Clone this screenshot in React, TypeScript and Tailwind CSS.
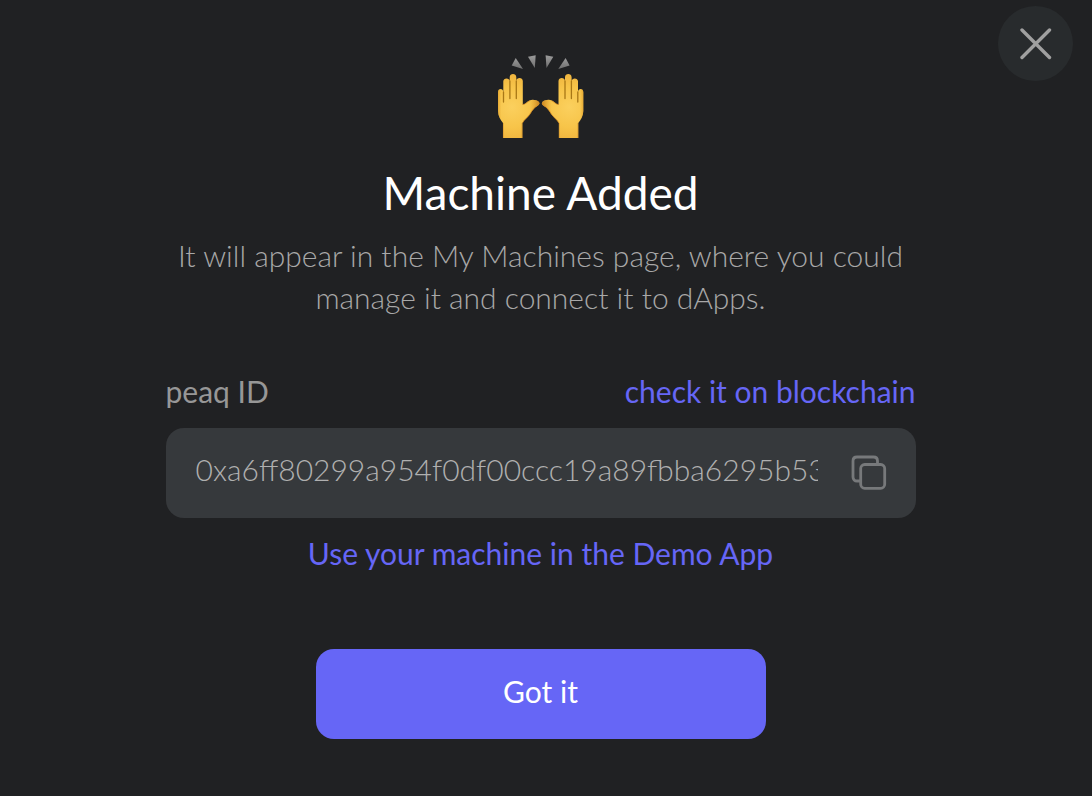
import React from "react";

const HAND =
  "M6 83V68C3.5 65 1 61 1 56V37.2C1 33 6.3 33 6.3 37.2V26.3C6.3 22.4 12.7 22.4 12.7 26.3V22.3C12.7 18 19.3 18 19.3 22.3V26C19.3 22 25.8 22 25.8 26V49.5C28.5 49 30 46.6 32.5 45.4C35.5 44 40 45 42 47C43 48.6 42.2 50 40 51.2C36 53.3 34.8 57 32.2 60.2C30 63 27 64.8 25.4 68V83Z";

function Hand() {
  return (
    <g>
      <path d={HAND} fill="url(#skin)" />
      <path d={HAND} fill="url(#edge)" />
      <path d="M6.5 37V47M12.9 26V43.5M19.3 26V43.5" fill="none" stroke="#a87716" strokeWidth="1.3" strokeLinecap="round" />
      <path d="M25.4 49.5C28 50 30.5 46.5 33 45.6M42 48.5C41 51 37 52 34.5 56.5C32.5 61 27.5 64 25.4 68" fill="none" stroke="#d78a22" strokeWidth="0.9" opacity="0.8" />
      <path d="M6.4 68V83M25 68V83" fill="none" stroke="#d08a22" strokeWidth="1" opacity="0.5" />
    </g>
  );
}

function RaisedHands() {
  return (
    <svg viewBox="0 0 88 84" className="h-[84px] w-[88px]" role="img" aria-label="Raising hands">
      <defs>
        <radialGradient id="skin" gradientUnits="userSpaceOnUse" cx="15" cy="52" r="34">
          <stop offset="0" stopColor="#fbd05e" />
          <stop offset="0.6" stopColor="#f7c449" />
          <stop offset="1" stopColor="#efb43e" />
        </radialGradient>
        <linearGradient id="edge" gradientUnits="userSpaceOnUse" x1="1" y1="0" x2="43" y2="0">
          <stop offset="0" stopColor="#d99522" stopOpacity="0.6" />
          <stop offset="0.08" stopColor="#e3a22c" stopOpacity="0" />
          <stop offset="0.75" stopColor="#d99522" stopOpacity="0" />
          <stop offset="1" stopColor="#b86f14" stopOpacity="0.75" />
        </linearGradient>
        <linearGradient id="ray" x1="0" y1="0" x2="0" y2="1">
          <stop offset="0" stopColor="#9b9b9b" />
          <stop offset="1" stopColor="#6f6f6f" />
        </linearGradient>
      </defs>
      <g fill="url(#ray)">
        <path d="M18.7 3L14.7 10.6L26 14Z" />
        <path d="M31 1.8L38.7 0.3L37.8 13Z" />
        <path d="M68.6 3L72.6 10.6L61.3 14Z" />
        <path d="M56.3 1.8L48.6 0.3L49.5 13Z" />
      </g>
      <Hand />
      <g transform="translate(87.3 0) scale(-1 1)">
        <Hand />
      </g>
    </svg>
  );
}

export default function App() {
  return (
    <main className="relative flex min-h-screen flex-col items-center bg-[#202123] pt-[55px] pr-[11px] pb-14 font-['Lato',sans-serif] text-[30px] leading-[42px] text-[#979797]">
      <button
        type="button"
        aria-label="Close"
        className="absolute top-1.5 right-[19px] flex size-[75px] items-center justify-center rounded-full bg-[#282b2d] text-[#a0a0a0]"
      >
        <svg viewBox="0 0 32 32" className="size-8" fill="none" stroke="currentColor" strokeWidth="3.4" strokeLinecap="round">
          <path d="M2 2L29.5 29.5M29.5 2L2 29.5" />
        </svg>
      </button>

      <RaisedHands />
      <h1 className="mt-6 text-[46px] leading-[60px] text-white">Machine Added</h1>
      <p className="mt-[11px] w-full max-w-[750px] text-center font-light text-[#a8a8a8]">
        It will appear in the My Machines page, where you could manage it and connect it to dApps.
      </p>

      <section className="mt-[52px] flex w-full max-w-[750px] flex-col">
        <div className="flex items-center justify-between">
          <label htmlFor="peaq-id">peaq ID</label>
          <a href="#blockchain" className="text-[#6666f6]">check it on blockchain</a>
        </div>
        <div className="mt-4 flex h-[90px] items-center rounded-[18px] bg-[#36393c] pr-7 pb-0.5 pl-[30px]">
          <input
            id="peaq-id"
            readOnly
            value="0xa6ff80299a954f0df00ccc19a89fbba6295b535c"
            className="min-w-0 flex-1 bg-transparent pb-1.5 font-light text-[#b0b0b0] outline-none"
          />
          <button type="button" aria-label="Copy peaq ID" className="ml-8 text-[#77797b]">
            <svg viewBox="0 0 38 38" className="size-[38px]" fill="none" stroke="currentColor" strokeWidth="2.8" strokeLinejoin="round">
              <rect x="10.7" y="11.5" width="24" height="23.8" rx="4" />
              <path d="M10.7 28H7C4.6 28 3 26.4 3 24V8C3 5.6 4.6 4 7 4H23.5C25.9 4 27.5 5.6 27.5 8V11.5" />
            </svg>
          </button>
        </div>
        <a href="#demo" className="mt-3.5 self-center text-[#6666f6]">Use your machine in the Demo App</a>
      </section>

      <button type="button" className="mt-[75px] h-[90px] w-full max-w-[450px] rounded-[18px] bg-[#6666f6] pb-1.5 text-white">
        Got it
      </button>
    </main>
  );
}
